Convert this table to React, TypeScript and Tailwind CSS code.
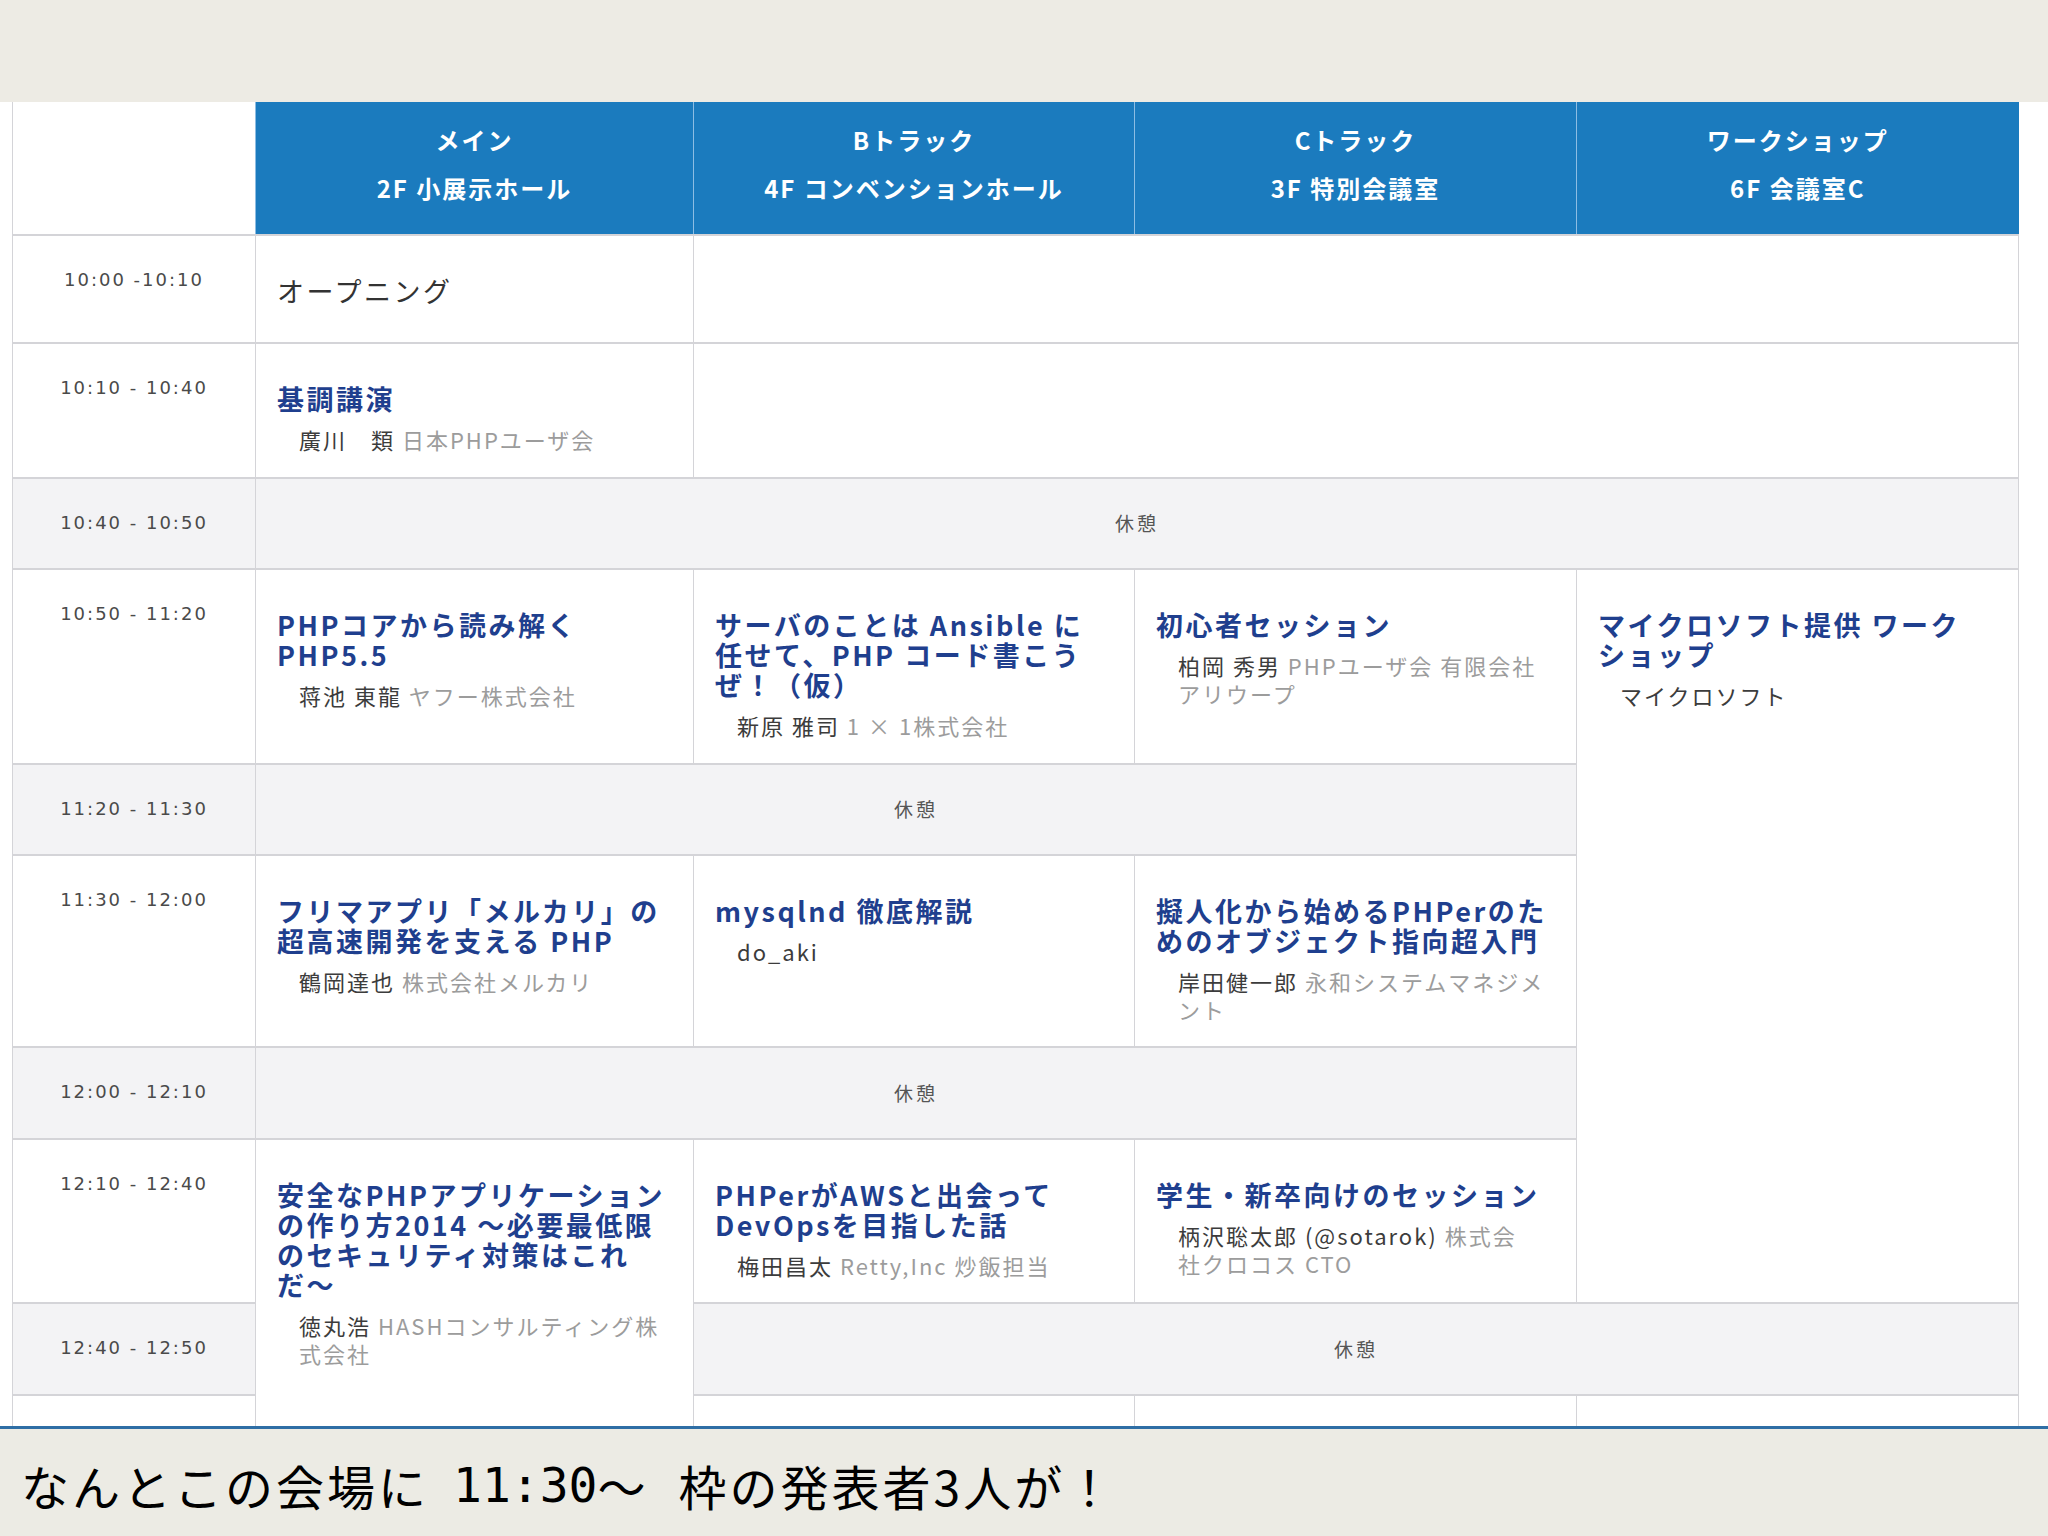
import React from "react";

type Seg = { t: string; c?: boolean };

const B = "border-x border-y-2 border-[#d4d4d8]";

function Head({ a, b }: { a: string; b: string }) {
  return (
    <th className="bg-[#1b7bbe] border-l border-[#8dbde3] text-white font-bold text-[24px] leading-[48px] tracking-[2px] align-middle text-center pb-[8px] whitespace-nowrap">
      <div>{a}</div>
      <div>{b}</div>
    </th>
  );
}

function Time({ t }: { t: string }) {
  return (
    <td
      className={`${B} align-top text-center pt-[32px] font-['DejaVu_Sans',sans-serif] text-[18px] leading-[24px] tracking-[2px] text-[#4a4a4a] whitespace-nowrap`}
    >
      {t}
    </td>
  );
}

function Session({
  title,
  speaker,
  rowSpan,
  colSpan,
}: {
  title: string[];
  speaker: Seg[][];
  rowSpan?: number;
  colSpan?: number;
}) {
  return (
    <td rowSpan={rowSpan} colSpan={colSpan} className={`${B} bg-white align-top pt-[40px] pl-[21px] pr-[10px]`}>
      <div className="text-[27px] leading-[30px] tracking-[2.5px] font-bold text-[#1f3f8e] whitespace-nowrap">
        {title.map((l, i) => (
          <div key={i}>{l}</div>
        ))}
      </div>
      <div className="mt-[11px] pl-[22px] text-[22px] leading-[28px] tracking-[2px] whitespace-nowrap">
        {speaker.map((line, i) => (
          <div key={i}>
            {line.map((s, j) => (
              <span key={j} className={s.c ? "text-[#9c9c9c]" : "text-[#3c3c3c]"}>
                {s.t}
              </span>
            ))}
          </div>
        ))}
      </div>
    </td>
  );
}

function Break({ colSpan }: { colSpan: number }) {
  return (
    <td colSpan={colSpan} className={`${B} align-middle text-center text-[19px] tracking-[3px] text-[#555]`}>
      休憩
    </td>
  );
}

export default function App() {
  return (
    <div className="w-[2048px] h-[1536px] overflow-hidden bg-white flex flex-col font-['Noto_Sans_CJK_JP','Noto_Sans',sans-serif]">
      <div className="h-[102px] shrink-0 bg-[#edebe4]" />
      <div className="flex-1 overflow-hidden pl-[12px]">
        <table className="table-fixed border-collapse w-[2006px]">
          <colgroup>
            <col className="w-[243px]" />
            <col className="w-[438px]" />
            <col className="w-[441px]" />
            <col className="w-[442px]" />
            <col className="w-[442px]" />
          </colgroup>
          <thead>
            <tr className="h-[133px]">
              <th className="bg-white border-l border-[#d4d4d8]" />
              <Head a="メイン" b="2F 小展示ホール" />
              <Head a="Bトラック" b="4F コンベンションホール" />
              <Head a="Cトラック" b="3F 特別会議室" />
              <Head a="ワークショップ" b="6F 会議室C" />
            </tr>
          </thead>
          <tbody>
            <tr className="h-[108px] bg-white">
              <Time t="10:00 -10:10" />
              <td className={`${B} align-top pt-[40px] pl-[21px] text-[27px] leading-[30px] tracking-[2.5px] text-[#333] whitespace-nowrap`}>
                オープニング
              </td>
              <td colSpan={3} className={B} />
            </tr>
            <tr className="h-[135px] bg-white">
              <Time t="10:10 - 10:40" />
              <Session
                title={["基調講演"]}
                speaker={[[{ t: "廣川　類 " }, { t: "日本PHPユーザ会", c: true }]]}
              />
              <td colSpan={3} className={B} />
            </tr>
            <tr className="h-[91px] bg-[#f3f3f5]">
              <Time t="10:40 - 10:50" />
              <Break colSpan={4} />
            </tr>
            <tr className="h-[195px] bg-white">
              <Time t="10:50 - 11:20" />
              <Session
                title={["PHPコアから読み解く", "PHP5.5"]}
                speaker={[[{ t: "蒋池 東龍 " }, { t: "ヤフー株式会社", c: true }]]}
              />
              <Session
                title={["サーバのことは Ansible に", "任せて、PHP コード書こう", "ぜ！（仮）"]}
                speaker={[[{ t: "新原 雅司 " }, { t: "1 × 1株式会社", c: true }]]}
              />
              <Session
                title={["初心者セッション"]}
                speaker={[
                  [{ t: "柏岡 秀男 " }, { t: "PHPユーザ会 有限会社", c: true }],
                  [{ t: "アリウープ", c: true }],
                ]}
              />
              <Session
                rowSpan={5}
                title={["マイクロソフト提供 ワーク", "ショップ"]}
                speaker={[[{ t: "マイクロソフト" }]]}
              />
            </tr>
            <tr className="h-[91px] bg-[#f3f3f5]">
              <Time t="11:20 - 11:30" />
              <Break colSpan={3} />
            </tr>
            <tr className="h-[192px] bg-white">
              <Time t="11:30 - 12:00" />
              <Session
                title={["フリマアプリ「メルカリ」の", "超高速開発を支える PHP"]}
                speaker={[[{ t: "鶴岡達也 " }, { t: "株式会社メルカリ", c: true }]]}
              />
              <Session title={["mysqlnd 徹底解説"]} speaker={[[{ t: "do_aki" }]]} />
              <Session
                title={["擬人化から始めるPHPerのた", "めのオブジェクト指向超入門"]}
                speaker={[
                  [{ t: "岸田健一郎 " }, { t: "永和システムマネジメ", c: true }],
                  [{ t: "ント", c: true }],
                ]}
              />
            </tr>
            <tr className="h-[92px] bg-[#f3f3f5]">
              <Time t="12:00 - 12:10" />
              <Break colSpan={3} />
            </tr>
            <tr className="h-[164px] bg-white">
              <Time t="12:10 - 12:40" />
              <Session
                rowSpan={3}
                title={[
                  "安全なPHPアプリケーション",
                  "の作り方2014 〜必要最低限",
                  "のセキュリティ対策はこれ",
                  "だ〜",
                ]}
                speaker={[
                  [{ t: "徳丸浩 " }, { t: "HASHコンサルティング株", c: true }],
                  [{ t: "式会社", c: true }],
                ]}
              />
              <Session
                title={["PHPerがAWSと出会って", "DevOpsを目指した話"]}
                speaker={[[{ t: "梅田昌太 " }, { t: "Retty,Inc 炒飯担当", c: true }]]}
              />
              <Session
                title={["学生・新卒向けのセッション"]}
                speaker={[
                  [{ t: "柄沢聡太郎 (@sotarok) " }, { t: "株式会", c: true }],
                  [{ t: "社クロコス CTO", c: true }],
                ]}
              />
            </tr>
            <tr className="h-[92px] bg-[#f3f3f5]">
              <Time t="12:40 - 12:50" />
              <Break colSpan={3} />
            </tr>
            <tr className="h-[120px] bg-white">
              <td className={B} />
              <td className={B} />
              <td className={B} />
              <td className={B} />
            </tr>
          </tbody>
        </table>
      </div>
      <div className="h-[110px] shrink-0 bg-[#ecebe4] border-t-[3px] border-[#2e6ea5] flex items-center pl-[21px] pt-[4px] text-[48px] tracking-[3px] text-black whitespace-nowrap">
        <span>なんとこの会場に</span>
        <span className="ml-[24px] font-['DejaVu_Sans_Mono',monospace] tracking-normal">11:30</span>
        <span>～</span>
        <span className="ml-[30px]">枠の発表者3人が！</span>
      </div>
    </div>
  );
}
